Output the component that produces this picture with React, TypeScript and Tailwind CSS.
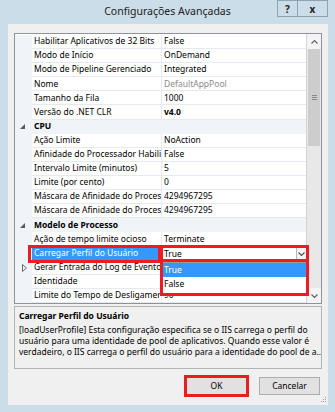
import React from 'react';

type Row =
  | { kind: 'cat'; name: string }
  | {
      kind: 'prop';
      name: string;
      value: string;
      gray?: boolean;
      bold?: boolean;
      expand?: boolean;
      selected?: boolean;
    };

const rows: Row[] = [
  { kind: 'prop', name: 'Habilitar Aplicativos de 32 Bits', value: 'False' },
  { kind: 'prop', name: 'Modo de Início', value: 'OnDemand' },
  { kind: 'prop', name: 'Modo de Pipeline Gerenciado', value: 'Integrated' },
  { kind: 'prop', name: 'Nome', value: 'DefaultAppPool', gray: true },
  { kind: 'prop', name: 'Tamanho da Fila', value: '1000' },
  { kind: 'prop', name: 'Versão do .NET CLR', value: 'v4.0', bold: true },
  { kind: 'cat', name: 'CPU' },
  { kind: 'prop', name: 'Ação Limite', value: 'NoAction' },
  { kind: 'prop', name: 'Afinidade do Processador Habili', value: 'False' },
  { kind: 'prop', name: 'Intervalo Limite (minutos)', value: '5' },
  { kind: 'prop', name: 'Limite (por cento)', value: '0' },
  { kind: 'prop', name: 'Máscara de Afinidade do Proces', value: '4294967295' },
  { kind: 'prop', name: 'Máscara de Afinidade do Proces', value: '4294967295' },
  { kind: 'cat', name: 'Modelo de Processo' },
  { kind: 'prop', name: 'Ação de tempo limite ocioso', value: 'Terminate' },
  { kind: 'prop', name: 'Carregar Perfil do Usuário', value: '', selected: true },
  { kind: 'prop', name: 'Gerar Entrada do Log de Evento', value: '', expand: true },
  { kind: 'prop', name: 'Identidade', value: '' },
  { kind: 'prop', name: 'Limite do Tempo de Desligamer', value: '90' },
];

function CatGlyph() {
  return (
    <svg width="5" height="5" viewBox="0 0 5 5">
      <polygon points="5,0 5,5 0,5" fill="#595959" />
    </svg>
  );
}

function ExpGlyph() {
  return (
    <svg width="5" height="8" viewBox="0 0 5 8">
      <polygon points="0.5,0.5 4.5,4 0.5,7.5" fill="none" stroke="#6b6b6b" strokeWidth="1" />
    </svg>
  );
}

function Chevron({ color = '#4d4d4d' }: { color?: string }) {
  return (
    <svg width="7" height="4" viewBox="0 0 7 4">
      <polyline points="0.5,0.5 3.5,3.5 6.5,0.5" fill="none" stroke={color} strokeWidth="1.1" />
    </svg>
  );
}

function GridRow({ row }: { row: Row }) {
  if (row.kind === 'cat') {
    return (
      <div className="flex h-[14.1px] bg-[#f0f3f8] items-center">
        <div className="w-[17px] h-full flex items-center pl-[5px]">
          <CatGlyph />
        </div>
        <div className="pl-[2px] font-bold text-[#000] whitespace-nowrap">{row.name}</div>
      </div>
    );
  }
  return (
    <div className="flex h-[14.1px]">
      <div className="w-[17px] h-full bg-[#f0f3f8] flex items-center pl-[7px]">
        {row.expand ? <ExpGlyph /> : null}
      </div>
      <div
        className={
          row.selected
            ? 'w-[130px] h-full flex items-center pl-[2px] bg-[#3399ff] text-white whitespace-nowrap overflow-hidden border-r border-[#dde2ea]'
            : 'w-[130px] h-full flex items-center pl-[2px] text-[#000] whitespace-nowrap overflow-hidden border-r border-b border-[#e6eaf0]'
        }
      >
        {row.name}
      </div>
      <div
        className={
          'flex-1 h-full flex items-center pl-[2px] whitespace-nowrap overflow-hidden border-b border-[#e6eaf0] ' +
          (row.gray ? 'text-[#8c8c8c] ' : 'text-[#000] ') +
          (row.bold ? 'font-bold' : '')
        }
      >
        {row.value}
      </div>
    </div>
  );
}

export default function App() {
  return (
    <div className="w-[335px] h-[412px] bg-[#cbdde8] flex flex-col overflow-hidden font-['Noto_Sans',sans-serif] text-[8.5px] leading-none">
      {/* Title bar */}
      <div className="h-[24px] relative flex items-center justify-center">
        <span className="text-[10.5px] text-[#222] pb-[2px]">Configurações Avançadas</span>
        <div className="absolute top-0 right-[7px] flex">
          <div className="w-[21px] h-[17px] border border-[#8fa2b0] flex items-center justify-center font-bold text-[10px] text-[#222]">
            ?
          </div>
          <div className="w-[30px] h-[17px] border border-l-0 border-[#8fa2b0] flex items-center justify-center font-bold text-[10px] text-[#222]">
            x
          </div>
        </div>
      </div>

      {/* Client area */}
      <div className="ml-[8px] w-[320px] h-[381px] bg-[#f0f0f0] flex flex-col px-[6px] pt-[9px] relative">
        {/* Property grid */}
        <div className="h-[271px] border border-[#8e939b] bg-white flex relative">
          <div className="flex-1 flex flex-col pt-[1px] overflow-hidden">
            {rows.map((r, i) => (
              <GridRow key={i} row={r} />
            ))}
          </div>
          {/* Scrollbar */}
          <div className="w-[15px] h-full bg-[#e8e8e8] border-l border-[#d4d4d4] flex flex-col">
            <div className="h-[15px] bg-[#f4f4f4] flex items-center justify-center">
              <div className="rotate-180 flex">
                <Chevron color="#606060" />
              </div>
            </div>
            <div className="h-[97px] mx-[1px] bg-[#cdcdcd] flex items-center justify-center">
              <div className="flex flex-col gap-[1px]">
                <div className="w-[5px] h-[1px] bg-[#8a8a8a]" />
                <div className="w-[5px] h-[1px] bg-[#8a8a8a]" />
                <div className="w-[5px] h-[1px] bg-[#8a8a8a]" />
              </div>
            </div>
            <div className="flex-1" />
            <div className="h-[15px] bg-[#f4f4f4] flex items-center justify-center">
              <Chevron color="#606060" />
            </div>
          </div>

          {/* Combobox of selected row */}
          <div className="absolute left-[145px] top-[211px] w-[149px] h-[18px] bg-white border-[3px] border-[#ed1c24] flex items-center">
            <span className="pl-[1px] text-[#000]">True</span>
            <div className="ml-auto w-[10px] h-full border-l border-[#b5b5b5] flex items-center justify-center bg-[#f4f4f4]">
              <Chevron />
            </div>
          </div>
          {/* Dropdown list */}
          <div className="absolute left-[145px] top-[225px] w-[149px] h-[37px] bg-white border-[3px] border-[#ed1c24]">
            <div className="h-full border-t border-[#9a9a9a] flex flex-col">
              <div className="h-[14px] bg-[#3399ff] text-white flex items-center pl-[1px]">True</div>
              <div className="h-[14px] text-[#000] flex items-center pl-[1px]">False</div>
            </div>
          </div>
          {/* Red box around selected name */}
          <div className="absolute left-[13px] top-[211px] w-[133px] h-[18px] border-[3px] border-[#ed1c24]" />
        </div>

        {/* Description panel */}
        <div className="mt-[2px] h-[63px] border border-[#b4b4b4] px-[4px] pt-[5px] overflow-hidden">
          <div className="font-bold text-[#000] whitespace-nowrap">Carregar Perfil do Usuário</div>
          <div className="mt-[5px] flex flex-col gap-[2.5px] text-[#000] whitespace-nowrap">
            <div>[loadUserProfile] Esta configuração especifica se o IIS carrega o perfil do</div>
            <div>usuário para uma identidade de pool de aplicativos. Quando esse valor é</div>
            <div>verdadeiro, o IIS carrega o perfil do usuário para a identidade do pool de a...</div>
          </div>
        </div>

        {/* Buttons */}
        <div className="mt-[8px] flex justify-end gap-[12px] pr-[2px]">
          <div className="relative">
            <div className="w-[61px] h-[18px] bg-[#e1e1e1] border border-[#adadad] flex items-center justify-center text-[#000]">
              OK
            </div>
            <div className="absolute -left-[2px] -top-[2px] w-[65px] h-[22px] border-[3px] border-[#ed1c24]" />
          </div>
          <div className="w-[61px] h-[18px] bg-[#e1e1e1] border border-[#adadad] flex items-center justify-center text-[#000]">
            Cancelar
          </div>
        </div>

        {/* Size grip */}
        <svg className="absolute right-[1px] bottom-[2px]" width="7" height="7" viewBox="0 0 7 7">
          <rect x="5" y="1" width="1" height="1" fill="#a0a0a0" />
          <rect x="3" y="3" width="1" height="1" fill="#a0a0a0" />
          <rect x="5" y="3" width="1" height="1" fill="#a0a0a0" />
          <rect x="1" y="5" width="1" height="1" fill="#a0a0a0" />
          <rect x="3" y="5" width="1" height="1" fill="#a0a0a0" />
          <rect x="5" y="5" width="1" height="1" fill="#a0a0a0" />
        </svg>
      </div>
    </div>
  );
}
